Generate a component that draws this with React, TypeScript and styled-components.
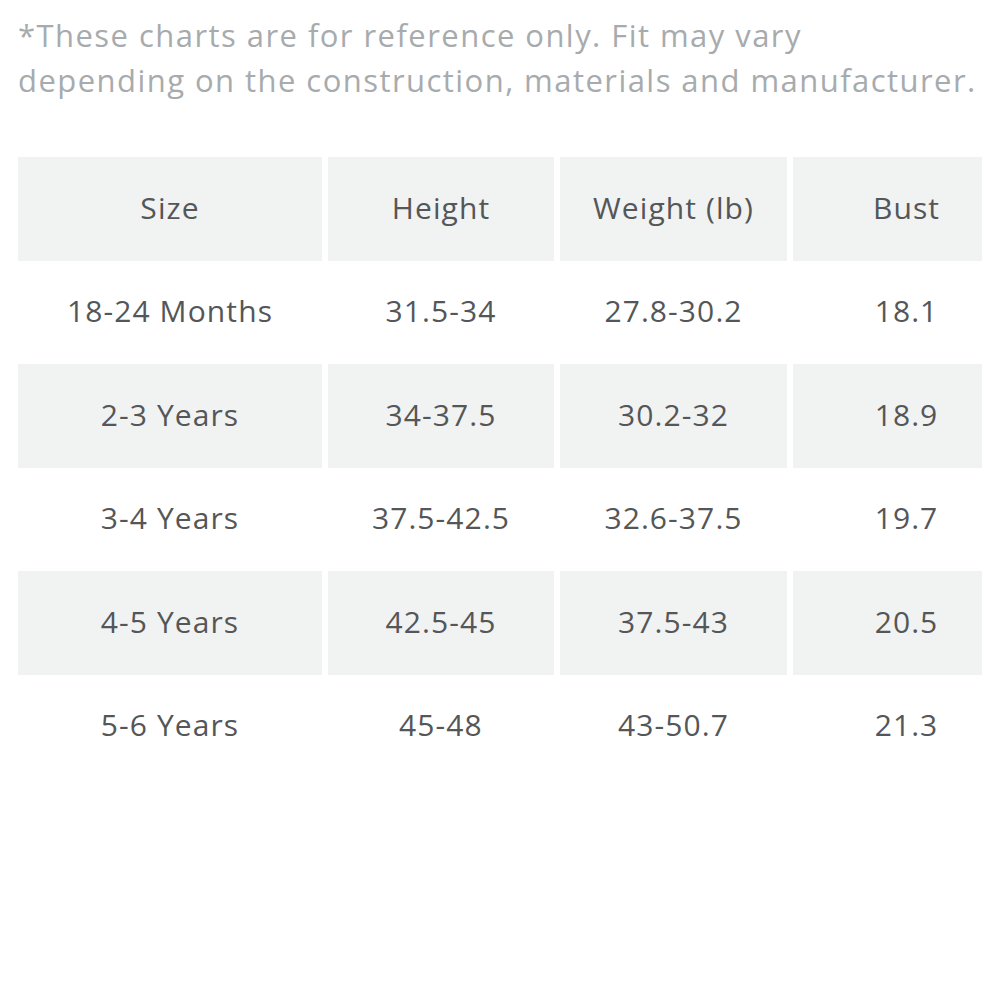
import React from "react";
import styled, { createGlobalStyle } from "styled-components";

const Global = createGlobalStyle`
  html, body { margin: 0; padding: 0; background: #ffffff; }
  body { font-family: "Open Sans", "Noto Sans", sans-serif; }
`;

const Page = styled.div`
  padding: 13px 19px 0 18px;
  width: 1000px;
  box-sizing: border-box;
`;

const Note = styled.p`
  margin: 0;
  color: #a7abad;
  font-size: 31px;
  line-height: 45px;
  letter-spacing: 1.45px;
  white-space: nowrap;
`;

const Grid = styled.div`
  margin-top: 54px;
  display: grid;
  grid-template-columns: 304px 226px 227px 189px;
  column-gap: 6px;
  grid-auto-rows: 103.5px;
`;

const Cell = styled.div<{ $shade: boolean; $last: boolean }>`
  display: flex;
  align-items: center;
  justify-content: center;
  padding-left: ${(p) => (p.$last ? "38px" : "0")};
  padding-bottom: 3px;
  background: ${(p) => (p.$shade ? "#f1f2f2" : "#ffffff")};
  color: #545657;
  font-size: 30px;
  letter-spacing: 1.1px;
`;

const header = ["Size", "Height", "Weight (lb)", "Bust"];
const rows = [
  ["18-24 Months", "31.5-34", "27.8-30.2", "18.1"],
  ["2-3 Years", "34-37.5", "30.2-32", "18.9"],
  ["3-4 Years", "37.5-42.5", "32.6-37.5", "19.7"],
  ["4-5 Years", "42.5-45", "37.5-43", "20.5"],
  ["5-6 Years", "45-48", "43-50.7", "21.3"],
];

export default function App() {
  const all = [header, ...rows];
  return (
    <Page>
      <Global />
      <Note>
        *These charts are for reference only. Fit may vary
        <br />
        depending on the construction, materials and manufacturer.
      </Note>
      <Grid>
        {all.map((r, i) =>
          r.map((c, j) => (
            <Cell key={`${i}-${j}`} $shade={i % 2 === 0} $last={j === 3}>
              {c}
            </Cell>
          ))
        )}
      </Grid>
    </Page>
  );
}
